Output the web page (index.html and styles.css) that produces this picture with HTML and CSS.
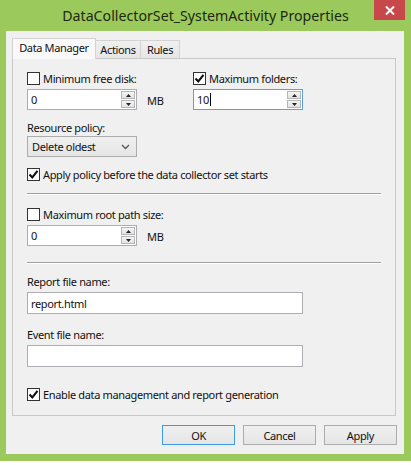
FILE: index.html
```html
<!DOCTYPE html>
<html>
<head>
<meta charset="utf-8">
<link rel="stylesheet" href="styles.css">
</head>
<body>
<div class="window">
  <div class="titlebar">
    <span class="title">DataCollectorSet_SystemActivity Properties</span>
    <div class="close"><svg width="10" height="9" viewBox="0 0 10 9"><path d="M1 0.5 L9 8.5 M9 0.5 L1 8.5" stroke="#fff" stroke-width="2"/></svg></div>
  </div>
  <div class="client">
    <div class="tabs">
      <div class="tab selected">Data Manager</div>
      <div class="tab">Actions</div>
      <div class="tab">Rules</div>
    </div>
    <div class="panel">
      <div class="grid2">
        <div class="col">
          <div class="cb-row"><span class="cb"></span><span>Minimum free disk:</span></div>
          <div class="num-row">
            <div class="numbox"><span class="val">0</span>
              <div class="spin"><span class="sbtn"><svg width="5" height="3" viewBox="0 0 5 3"><path d="M2.5 0 L5 3 L0 3Z" fill="#222"/></svg></span><span class="sbtn"><svg width="5" height="3" viewBox="0 0 5 3"><path d="M0 0 L5 0 L2.5 3Z" fill="#222"/></svg></span></div>
            </div>
            <span class="unit">MB</span>
          </div>
        </div>
        <div class="col">
          <div class="cb-row"><span class="cb checked"><svg width="11" height="11" viewBox="0 0 11 11"><path d="M1.5 5.5 L4.3 8.5 L9.5 1.8" fill="none" stroke="#111" stroke-width="2.1"/></svg></span><span>Maximum folders:</span></div>
          <div class="num-row">
            <div class="numbox focus"><span class="val">10<span class="caret"></span></span>
              <div class="spin"><span class="sbtn"><svg width="5" height="3" viewBox="0 0 5 3"><path d="M2.5 0 L5 3 L0 3Z" fill="#222"/></svg></span><span class="sbtn"><svg width="5" height="3" viewBox="0 0 5 3"><path d="M0 0 L5 0 L2.5 3Z" fill="#222"/></svg></span></div>
            </div>
          </div>
        </div>
      </div>
      <div class="label lbl-policy">Resource policy:</div>
      <div class="select"><span>Delete oldest</span><svg width="9" height="6" viewBox="0 0 9 6"><path d="M1 1 L4.5 4.5 L8 1" fill="none" stroke="#555" stroke-width="1.3"/></svg></div>
      <div class="cb-row apply"><span class="cb checked"><svg width="11" height="11" viewBox="0 0 11 11"><path d="M1.5 5.5 L4.3 8.5 L9.5 1.8" fill="none" stroke="#111" stroke-width="2.1"/></svg></span><span>Apply policy before the data collector set starts</span></div>
      <div class="sep sep1"></div>
      <div class="cb-row rootcb"><span class="cb"></span><span>Maximum root path size:</span></div>
      <div class="num-row">
        <div class="numbox"><span class="val">0</span>
          <div class="spin"><span class="sbtn"><svg width="5" height="3" viewBox="0 0 5 3"><path d="M2.5 0 L5 3 L0 3Z" fill="#222"/></svg></span><span class="sbtn"><svg width="5" height="3" viewBox="0 0 5 3"><path d="M0 0 L5 0 L2.5 3Z" fill="#222"/></svg></span></div>
        </div>
        <span class="unit">MB</span>
      </div>
      <div class="sep sep2"></div>
      <div class="label lbl-file">Report file name:</div>
      <div class="textbox">report.html</div>
      <div class="label lbl-file2">Event file name:</div>
      <div class="textbox"></div>
      <div class="cb-row enable"><span class="cb checked"><svg width="11" height="11" viewBox="0 0 11 11"><path d="M1.5 5.5 L4.3 8.5 L9.5 1.8" fill="none" stroke="#111" stroke-width="2.1"/></svg></span><span>Enable data management and report generation</span></div>
    </div>
    <div class="buttons">
      <div class="btn default">OK</div>
      <div class="btn">Cancel</div>
      <div class="btn">Apply</div>
    </div>
  </div>
</div>
</body>
</html>
```

FILE: styles.css
```css
* { box-sizing: border-box; }
html, body { margin: 0; padding: 0; background: #fff; }
body {
  font-family: "Noto Sans", "DejaVu Sans", sans-serif;
  font-size: 11px;
  letter-spacing: -0.35px;
  color: #111;
  width: 411px;
  height: 465px;
  overflow: hidden;
}
.window {
  width: 411px;
  height: 461px;
  background: #9bc95b;
  padding: 0 7px 7px 6px;
  display: flex;
  flex-direction: column;
}
.titlebar {
  height: 31px;
  position: relative;
  display: flex;
  align-items: center;
  justify-content: center;
  margin: 0 -7px 0 -6px;
}
.title {
  font-size: 14.2px;
  letter-spacing: 0;
  color: #1b2812;
  margin-top: -1px;
}
.close {
  position: absolute;
  top: 0;
  right: 6px;
  width: 31px;
  height: 20px;
  background: #c8474b;
  display: flex;
  align-items: center;
  justify-content: center;
}
.client {
  flex: 1;
  background: #f0f0f0;
  padding: 7px 7px 8px 6px;
  display: flex;
  flex-direction: column;
}
.tabs {
  display: flex;
  align-items: flex-end;
  height: 20px;
  margin-right: 1px;
}
.tab {
  height: 18px;
  border: 1px solid #d3d3d3;
  border-bottom: none;
  border-left: none;
  background: linear-gradient(#f0f0f0, #e6e6e6);
  display: flex;
  align-items: center;
  justify-content: center;
  padding: 0 0 1px;
  white-space: nowrap;
}
.tab.selected {
  position: relative;
  height: 21px;
  margin-bottom: -1px;
  border-left: 1px solid #d3d3d3;
  background: #f9f9f9;
  width: 84px;
  padding-bottom: 3px;
  z-index: 1;
}
.tab:nth-child(2) { width: 45px; }
.tab:nth-child(3) { width: 39px; }
.panel {
  height: 358px;
  margin-right: 1px;
  border: 1px solid #c8c8c8;
  background: #f0f0f0;
  padding: 11px 14px 0 14px;
  display: flex;
  flex-direction: column;
}
.grid2 {
  display: grid;
  grid-template-columns: 166px 1fr;
}
.col { display: flex; flex-direction: column; }
.cb-row {
  height: 17px;
  display: flex;
  align-items: center;
  gap: 3px;
  white-space: nowrap;
}
.cb {
  width: 13px;
  height: 13px;
  border: 1px solid #333;
  background: #fff;
  display: flex;
  align-items: center;
  justify-content: center;
  flex: none;
}
.num-row {
  display: flex;
  align-items: center;
  margin-top: 2px;
  gap: 10px;
}
.numbox {
  width: 110px;
  height: 21px;
  border: 1px solid #abadb3;
  background: #fff;
  display: flex;
  align-items: center;
  padding: 0 1px 0 3px;
}
.numbox.focus { border-color: #5a9fe3; }
.val { flex: 1; display: flex; align-items: center; }
.caret {
  display: inline-block;
  width: 1px;
  height: 13px;
  background: #000;
  margin-left: 1px;
}
.spin {
  width: 14px;
  display: flex;
  flex-direction: column;
  gap: 1px;
}
.sbtn {
  height: 8px;
  border: 1px solid #b5b5b5;
  background: linear-gradient(#f4f4f4, #e3e3e3);
  display: flex;
  align-items: center;
  justify-content: center;
}
.unit { padding-top: 1px; }
.label { height: 16px; display: flex; align-items: center; }
.lbl-policy { margin-top: 9px; }
.select {
  margin-top: 1px;
  width: 110px;
  height: 21px;
  border: 1px solid #acacac;
  background: linear-gradient(#f0f0f0, #e5e5e5);
  display: flex;
  align-items: center;
  justify-content: space-between;
  padding: 0 6px 0 4px;
}
.apply { margin-top: 9px; }
.sep {
  height: 2px;
  border-top: 1px solid #a0a0a0;
  border-bottom: 1px solid #fff;
}
.sep1 { margin-top: 10px; }
.rootcb { margin-top: 11px; }
.sep2 { margin-top: 16px; }
.lbl-file { margin-top: 9px; }
.lbl-file2 { margin-top: 12px; }
.textbox {
  margin-top: 3px;
  width: 276px;
  height: 22px;
  border: 1px solid #abadb3;
  background: #fff;
  display: flex;
  align-items: center;
  padding-left: 3px;
}
.enable { margin-top: 19px; }
.buttons {
  display: flex;
  justify-content: flex-end;
  gap: 8px;
  margin-top: 9px;
}
.btn {
  width: 73px;
  height: 20px;
  border: 1px solid #acacac;
  background: linear-gradient(#f0f0f0, #e5e5e5);
  display: flex;
  align-items: center;
  justify-content: center;
}
.btn.default { border-color: #3c9ae6; }
```
